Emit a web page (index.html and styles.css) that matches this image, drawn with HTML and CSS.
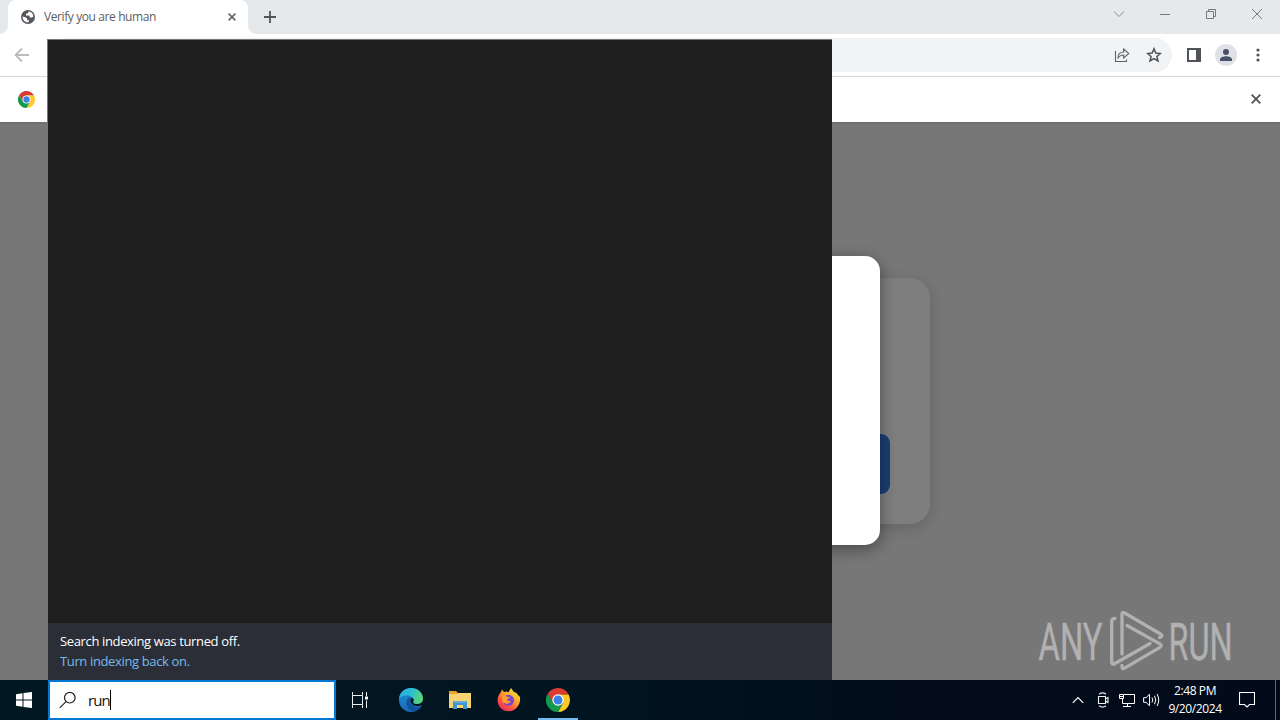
FILE: index.html
```html
<!DOCTYPE html>
<html lang="en">
<head>
<meta charset="utf-8">
<title>Desktop</title>
<link rel="stylesheet" href="styles.css">
</head>
<body>
<svg class="defs" width="0" height="0" aria-hidden="true">
  <symbol id="chrome" viewBox="0 0 24 24">
    <path fill="#d93b30" d="M1.6 6L7 15L12 6.4H22.6L22 5.4A12 12 0 0 0 1.6 6Z"/>
    <path fill="#fdc928" d="M12 6.4H22.6A12 12 0 0 1 12 24L17 14.8Z"/>
    <path fill="#149a4b" d="M1.6 6L7 14.8L17 14.8L12 24A12 12 0 0 1 1.6 6Z"/>
    <circle cx="12" cy="12" r="5.7" fill="#fff"/>
    <circle cx="12" cy="12" r="4.5" fill="#3b82e8"/>
  </symbol>
</svg>
<div class="desktop">
  <header class="tabstrip">
    <div class="tab">
      <svg class="globe" width="14" height="14" viewBox="0 0 14 14"><circle cx="7" cy="7" r="7" fill="#55585c"/><path fill="#fff" d="M7.6 1.4L7 3.2L5 3.8V5.4H8.2L9 7.6H11L12.4 6.4A5.6 5.6 0 0 0 7.6 1.4ZM1.5 6.5L4.6 7.3L6.4 9L6 10.3H8.2L7.2 12.5A5.6 5.6 0 0 1 1.5 6.5Z"/></svg>
      <span class="tab-title">Verify you are human</span>
      <svg width="8" height="8" viewBox="0 0 8 8"><path d="M.6.6L7.4 7.4M7.4.6L.6 7.4" stroke="#5f6368" stroke-width="1.5"/></svg>
    </div>
    <svg class="plus" width="12" height="12" viewBox="0 0 12 12"><path d="M6 0V12M0 6H12" stroke="#505357" stroke-width="1.8"/></svg>
    <div class="window-controls">
      <svg width="12" height="12" viewBox="0 0 12 12"><path d="M1 3.5L6 8.5L11 3.5" fill="none" stroke="#8a8c8f"/></svg>
      <svg width="12" height="12" viewBox="0 0 12 12"><path d="M1 6.5H11" stroke="#77797c"/></svg>
      <svg width="12" height="12" viewBox="0 0 12 12"><path d="M1.5 3.5H8.5V10.5H1.5ZM3.5 3V1.5H10.5V8.5H9" fill="none" stroke="#77797c"/></svg>
      <svg width="12" height="12" viewBox="0 0 12 12"><path d="M1 1L11 11M11 1L1 11" stroke="#77797c"/></svg>
    </div>
  </header>
  <div class="toolbar">
    <svg class="back" width="16" height="16" viewBox="0 0 16 16"><path d="M15 8H2M8 1.5L1.6 8L8 14.5" fill="none" stroke="#b9bbbe" stroke-width="1.8"/></svg>
    <div class="omnibox">
      <svg width="16" height="16" viewBox="0 0 16 16"><path d="M1.5 4V14.5H12.5V12.5M3.8 11.5C4 7 6.3 5 9.6 5V2L14.8 6.5L9.6 11V8C7 8 5.2 9 3.8 11.5Z" fill="none" stroke="#5f6368" stroke-width="1.1"/></svg>
      <svg width="16" height="16" viewBox="0 0 16 16"><path d="M8 1.8L9.8 6.1L14.4 6.5L10.9 9.5L12 14L8 11.6L4 14L5.1 9.5L1.6 6.5L6.2 6.1Z" fill="none" stroke="#4f5256" stroke-width="1.5"/></svg>
    </div>
    <svg class="side-panel" width="14" height="14" viewBox="0 0 14 14"><path fill="#4f5256" d="M0 0H14V14H0ZM2 2V12H9V2Z" fill-rule="evenodd"/></svg>
    <svg class="avatar" width="22" height="22" viewBox="0 0 22 22"><circle cx="11" cy="11" r="11" fill="#dfe1e7"/><circle cx="11" cy="8" r="3" fill="#484f68"/><path d="M5 17V15.5C5 13 8.5 12.2 11 12.2S17 13 17 15.5V17Z" fill="#484f68"/></svg>
    <svg class="menu" width="4" height="14" viewBox="0 0 4 14"><g fill="#505357"><circle cx="2" cy="2" r="1.6"/><circle cx="2" cy="7" r="1.6"/><circle cx="2" cy="12" r="1.6"/></g></svg>
  </div>
  <div class="infobar">
    <svg width="17" height="17"><use href="#chrome"/></svg>
    <svg width="10" height="10" viewBox="0 0 10 10"><path d="M.7.7L9.3 9.3M9.3.7L.7 9.3" stroke="#505357" stroke-width="1.8"/></svg>
  </div>
  <main class="page">
    <div class="card"><div class="button"></div></div>
    <div class="modal"></div>
    <svg class="watermark" width="220" height="70" viewBox="0 0 220 70">
      <g class="mark-text"><text x="3.5" y="48.5" textLength="64" lengthAdjust="spacingAndGlyphs">ANY</text><text x="133.5" y="48.5" textLength="64" lengthAdjust="spacingAndGlyphs">RUN</text></g>
      <path class="mark-line" d="M87 43V3Q87 .5 89.3 1.8L125.5 23Q128 24.5 126 26L124.5 26.5M92 14.5L124.5 32.6Q128 34.6 124.5 36.6L90 56.8Q87 58.5 87 56V54.5M80 7.5Q76.7 7.5 76.7 10.5V50.5Q76.7 54.5 80 52.5L115 32.5"/>
    </svg>
  </main>
  <section class="search-panel">
    <div class="search-notice"><p>Search indexing was turned off.</p><a>Turn indexing back on.</a></div>
  </section>
  <footer class="taskbar">
    <div class="start"><svg width="16" height="16" viewBox="0 0 16 16"><path fill="#fff" d="M0 2.2L6.5 1.2V7.5H0ZM7.5 1L16 0V7.5H7.5ZM0 8.5H6.5V14.8L0 13.8ZM7.5 8.5H16V16L7.5 15Z"/></svg></div>
    <div class="search-field">
      <svg width="18" height="18" viewBox="0 0 18 18"><circle cx="10.8" cy="6.7" r="5.3" fill="none" stroke="#222" stroke-width="1.2"/><path d="M7 10.6L.8 16.8" stroke="#222" stroke-width="1.2"/></svg>
      <span class="query">run</span><i class="caret"></i>
    </div>
    <nav class="apps">
      <div class="app task-view"><svg width="18" height="16" viewBox="0 0 18 16"><path d="M1.5 0V3.5H11.5V0M1.5 16V12.5H11.5V16M1.5 3.5V12.5M11.5 3.5V12.5M15.5 0V4M15.5 8.5V16" fill="none" stroke="#e7eeee" stroke-width="1"/><path d="M14 4.5H17V7.5H14Z" fill="#fff"/></svg></div>
      <div class="app edge"><svg width="24" height="24" viewBox="0 0 24 24"><defs><linearGradient id="eg" x1="0" y1="0" x2="1" y2=".25"><stop offset="0" stop-color="#27a6dd"/><stop offset=".55" stop-color="#2abfd4"/><stop offset="1" stop-color="#59d477"/></linearGradient><linearGradient id="eb" x1="0" y1="0" x2="0" y2="1"><stop offset="0" stop-color="#2090dc"/><stop offset="1" stop-color="#1668b7"/></linearGradient></defs><circle cx="12" cy="12" r="12" fill="url(#eb)"/><path d="M0 10.5C1 3.5 6 0 12 0C19 0 24 5 24 10.4C24 14 21 16 17.8 16C15 16 14 15 14.1 14.1C14.5 13.5 15 12.8 14.6 11C13 6.6 5 5.5 0 10.5Z" fill="url(#eg)"/><path d="M9.6 9.4C5 13.8 8 22.8 15 23.6C18.5 22.5 21 20.5 22.3 18.1C17 20 11.6 18.1 10.5 13C10.3 11.8 10.8 10.3 12 9.5Z" fill="#12539a"/><path d="M12.8 9.7C10 11 10.7 17 17.5 18C20 18.3 22.3 17.2 23.3 16.7L22.3 18.5L24 20V13C22 16 18 16.5 15.5 15.8C13.4 15 14.3 14 14.6 13C15 11.5 14 10 12.8 9.7Z" fill="#011821"/></svg></div>
      <div class="app"><svg width="22" height="20" viewBox="0 0 22 20"><path fill="#e9a52b" d="M0 1H7L9 3H22V10H0Z"/><path fill="#f7d473" d="M0 4H8L10 3H22V18H0Z"/><path fill="#3d97ce" d="M4 19V11H18V19H14V15H8V19Z"/><path fill="#62ace0" d="M5 11H17V13H5Z"/></svg></div>
      <div class="app"><svg width="24" height="24" viewBox="0 0 24 24"><defs><linearGradient id="ff" x1=".9" y1="0" x2=".2" y2="1"><stop offset="0" stop-color="#fff04b"/><stop offset=".35" stop-color="#ffb529"/><stop offset=".7" stop-color="#ff583c"/><stop offset="1" stop-color="#ed2466"/></linearGradient></defs><path fill="url(#ff)" d="M4 4L5 1.4L7 4L9.6 3.5L11.5 4.2L14 0L17 4.2L19 4.5L21 7L23 9C24 16 19 23.3 12 23.3S.3 18 .6 12C.7 9 2 6 4 4Z"/><circle cx="11.5" cy="12.3" r="5.5" fill="#7946cd"/><path fill="#ff9b2c" d="M4 6.4C7 6 9 7.2 9.5 8.7L13 9.1C12.7 10.6 10.4 10.7 10 11.6C10 13 12 13.5 14 12.8C13 15.8 8.5 16.8 6.2 14.6C4.7 12.3 5.5 10 4 6.4Z"/></svg></div>
      <div class="app active"><svg width="24" height="24"><use href="#chrome"/></svg></div>
    </nav>
    <div class="tray">
      <svg class="chevron" width="12" height="8" viewBox="0 0 12 8"><path d="M.8 6.8L6 1.5L11.2 6.8" fill="none" stroke="#fff" stroke-width="1.2"/></svg>
      <svg class="camera" width="12" height="16" viewBox="0 0 12 16"><path d="M2 2.2Q5.5-.4 9 2.2M2 13.8Q5.5 16.4 9 13.8M1.5 4.5H8.5V11.5H1.5ZM8.5 7L11 5.5V10.5L8.5 9" fill="none" stroke="#eee" stroke-width="1.1"/></svg>
      <svg class="network" width="16" height="14" viewBox="0 0 16 14"><path d="M5 1.5H15.5V10.5H3.5V6M8.5 10.5V13M4 13.5H12M.5 1.5H4.5V5.5H.5ZM1 3.5H4" fill="none" stroke="#fff"/></svg>
      <svg class="volume" width="17" height="14" viewBox="0 0 17 14"><path d="M.6 4.7H3L6.5 1.3V12.7L3 9.3H.6ZM9 4.5Q10.5 7 9 9.5M11.5 2.8Q14 7 11.5 11.2M14 1Q17.5 7 14 13" fill="none" stroke="#fff"/></svg>
      <div class="clock"><span>2:48 PM</span><span>9/20/2024</span></div>
      <svg class="notice-icon" width="16" height="16" viewBox="0 0 16 16"><path d="M.5.5H15.5V12.5H10.5L8 15L5.5 12.5H.5Z" fill="none" stroke="#fff" stroke-width="1.1"/></svg>
      <i class="show-desktop"></i>
    </div>
  </footer>
</div>
</body>
</html>
```
FILE: styles.css
```css
* { box-sizing: border-box; }
body { margin: 0; font-family: "Open Sans", "Noto Sans", sans-serif; }
svg { display: block; flex: none; }
.defs { position: absolute; }
.desktop { position: relative; width: 1280px; height: 720px; overflow: hidden; display: flex; flex-direction: column; background: #fff; }

.tabstrip { height: 34px; flex: none; display: flex; background: #e6e9ec; padding-left: 8px; }
.tab { position: relative; width: 240px; display: flex; align-items: center; padding: 0 12px 0 13px; background: #fff; border-radius: 8px 8px 0 0; }
.tab::before, .tab::after { content: ""; position: absolute; bottom: 0; width: 8px; height: 8px; }
.tab::before { left: -8px; background: radial-gradient(circle at 0 0, transparent 7.5px, #fff 8px); }
.tab::after { right: -8px; background: radial-gradient(circle at 100% 0, transparent 7.5px, #fff 8px); }
.tab-title { flex: 1; margin-left: 9px; font-size: 12px; line-height: 16px; color: #5c5e61; white-space: nowrap; letter-spacing: -.4px; }
.plus { margin: 11px 0 0 16px; }
.window-controls { margin-left: auto; padding: 8px 17px 0 0; display: flex; gap: 34px; }

.toolbar { height: 43px; flex: none; display: flex; align-items: center; padding-left: 14px; border-bottom: 1px solid #d5d7da; }
.omnibox { flex: 1; height: 34px; margin-left: 20px; background: #f1f3f4; border-radius: 17px; display: flex; align-items: center; justify-content: flex-end; gap: 16px; padding-right: 10px; }
.side-panel { margin-left: 15px; }
.avatar { margin-left: 14px; }
.menu { margin: 0 20px 0 19px; }
.infobar { height: 45px; flex: none; display: flex; align-items: center; justify-content: space-between; padding: 0 19px 1px 18px; }

.page { position: relative; flex: 1; overflow: hidden; background: linear-gradient(#6b6b6b, #777 3px); }
.card { position: absolute; left: 350px; top: 156px; width: 580px; height: 246px; padding: 156px 40px 0; border-radius: 20px; background: #7e7e7e; box-shadow: 0 4px 15px rgba(0,0,0,.16); }
.button { height: 60px; border-radius: 9px; background: #1c3d73; }
.modal { position: absolute; left: 400px; top: 134px; width: 480px; height: 289px; border-radius: 15px; background: #fff; box-shadow: 0 4px 16px rgba(0,0,0,.4); }
.watermark { position: absolute; left: 1035px; top: 489px; }
.mark-text { font-family: Roboto, sans-serif; font-size: 51px; font-weight: 400; fill: #b1b1b1; stroke: #b1b1b1; stroke-width: .5px; }
.mark-line { fill: none; stroke: #b1b1b1; stroke-width: 3.3px; stroke-linejoin: round; stroke-linecap: round; }

.search-panel { position: absolute; left: 47px; top: 39px; width: 785px; height: 641px; border: solid #777; border-width: 1px 0 0 1px; background: #1f1f1f; display: flex; flex-direction: column; justify-content: flex-end; }
.search-notice { height: 57px; padding: 8px 12px; background: #2b2e36; color: #fff; font-size: 13px; line-height: 20px; letter-spacing: -.36px; }
.search-notice p { margin: 0; }
.search-notice a { display: block; color: #76b9ed; }

.taskbar { height: 40px; flex: none; display: flex; background: linear-gradient(90deg, #011821, #011520 45%, #020c1b 70%, #020b1a); color: #fff; }
.start { width: 48px; display: grid; place-items: center; }
.search-field { width: 288px; display: flex; align-items: center; border: 2px solid #0078d4; background: #fff; color: #111; padding-left: 9px; }
.query { margin-left: 11px; font-size: 15px; line-height: 20px; letter-spacing: -.9px; }
.caret { width: 1px; height: 20px; background: #000; }
.apps { display: flex; }
.app { width: 49px; display: grid; place-items: center; }
.app.active { border-bottom: 2px solid #76b9ed; width: 40px; margin-left: 5px; padding-top: 2px; }
.task-view { padding-right: 2px; }
.edge { margin-left: 1px; }
.tray { margin-left: auto; display: flex; align-items: center; }
.camera { margin-left: 13px; }
.network { margin-left: 10px; }
.volume { margin-left: 8px; }
.clock { width: 60px; margin-left: 5px; display: flex; flex-direction: column; align-items: center; font-size: 12px; line-height: 18px; letter-spacing: -.4px; white-space: nowrap; }
.notice-icon { margin-left: 14px; }
.show-desktop { width: 5px; height: 40px; margin-left: 20px; border-left: 1px solid #62676f; }
```
